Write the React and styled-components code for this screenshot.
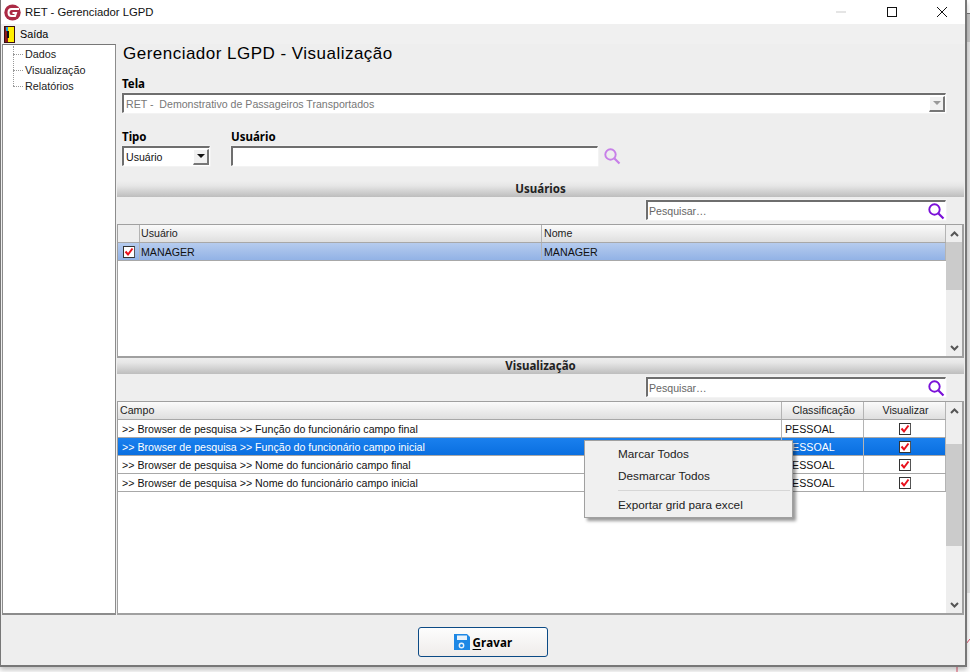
import React from "react";
import styled, { createGlobalStyle } from "styled-components";

const GlobalStyle = createGlobalStyle`
  html, body {
    margin: 0;
    padding: 0;
    width: 970px;
    height: 672px;
    overflow: hidden;
    background: #fff;
    font-family: "Liberation Sans", Arial, sans-serif;
    font-size: 11px;
    color: #000;
  }
  * { box-sizing: border-box; }
`;

const Win = styled.div`
  position: relative;
  width: 967px;
  height: 667px;
  background: #eeeeee;
  border-left: 1px solid #777;
  border-right: 2px solid #777;
  border-bottom: 2px solid #777;
  display: flex;
  flex-direction: column;
  box-shadow: 0 3px 5px rgba(0, 0, 0, 0.25);
`;

const BehindStrip = styled.div`
  position: absolute;
  left: 966px;
  top: 13px;
  width: 4px;
  height: 580px;
  border-top: 1px solid #777;
  background: linear-gradient(#c8c8c8 0, #c8c8c8 28px, #e6e6e6 28px);
`;

const CornerMark = styled.svg`
  position: absolute;
  left: 950px;
  top: 630px;
`;

const TitleBar = styled.div`
  height: 24px;
  background: #fff;
  display: flex;
  align-items: center;
  padding-left: 3px;
  font-size: 11.3px;
  gap: 4px;
  flex: none;
`;

const TitleText = styled.span`
  flex: 1;
  color: #111;
`;

const WinButton = styled.div`
  width: 46px;
  height: 24px;
  display: flex;
  align-items: center;
  justify-content: center;
`;

const MenuBar = styled.div`
  height: 20px;
  display: flex;
  align-items: center;
  padding-left: 3px;
  gap: 5px;
  flex: none;
  background: #f0f0f0;
  font-size: 10.8px;
`;

const Body = styled.div`
  flex: none;
  height: 571px;
  display: flex;
  padding: 0 1px;
`;

const Sidebar = styled.div`
  width: 114px;
  background: #fff;
  border: 1px solid #8c8c8c;
  border-top: 1px solid #777;
  border-bottom-width: 2px;
  padding-top: 1px;
  flex: none;
`;

const TreeItem = styled.div`
  height: 16px;
  line-height: 16px;
  padding-left: 22px;
  position: relative;
  font-size: 10.8px;
  color: #222;
  &::before {
    content: "";
    position: absolute;
    left: 10px;
    top: 8px;
    width: 10px;
    border-top: 1px dotted #999;
  }
  &::after {
    content: "";
    position: absolute;
    left: 10px;
    top: ${(p) => (p.$first ? "0" : "-8px")};
    height: ${(p) => (p.$first ? "8px" : "16px")};
    border-left: 1px dotted #999;
  }
`;

const Main = styled.div`
  flex: 1;
  min-width: 0;
  display: flex;
  flex-direction: column;
  padding-left: 1px;
`;

const Heading = styled.div`
  height: 20px;
  margin-left: 6px;
  font-size: 17px;
  line-height: 20px;
  letter-spacing: 0.48px;
`;

const Label = styled.div`
  font-family: "Noto Sans", "Liberation Sans", sans-serif;
  font-weight: 700;
  font-size: 11.5px;
  line-height: 14px;
  height: 14px;
`;

const TelaBlock = styled.div`
  margin: 13px 0 0 5px;
  width: 824px;
  display: flex;
  flex-direction: column;
  gap: 2px;
`;

const Sunken = styled.div`
  height: ${(p) => p.$h || 20}px;
  width: ${(p) => (p.$w ? `${p.$w}px` : "auto")};
  background: #fff;
  border-top: 2px solid #6e6e6e;
  border-left: 2px solid #6e6e6e;
  border-right: 1px solid #fff;
  border-bottom: 1px solid #fff;
  box-shadow: 0 0 0 0.5px #f8f8f8;
  display: flex;
  align-items: center;
  font-size: 10.6px;
  padding-left: 2px;
`;

const ComboText = styled.span`
  flex: 1;
  color: ${(p) => (p.$muted ? "#777" : "#111")};
  white-space: pre;
`;

const ComboArrow = styled.div`
  width: 16px;
  height: 16px;
  background: #f1f1f1;
  border-right: 2px solid #777;
  border-bottom: 2px solid #777;
  border-left: 1px solid #fff;
  border-top: 1px solid #fff;
  display: flex;
  align-items: center;
  justify-content: center;
  &::before {
    content: "";
    border-left: 4px solid transparent;
    border-right: 4px solid transparent;
    border-top: 4px solid ${(p) => (p.$muted ? "#999" : "#111")};
  }
`;

const FilterRow = styled.div`
  margin: 17px 0 0 5px;
  display: flex;
  gap: 21px;
  height: 36px;
`;

const Field = styled.div`
  display: flex;
  flex-direction: column;
  gap: 2px;
`;

const UserInputRow = styled.div`
  display: flex;
  align-items: center;
  gap: 5px;
`;

const SectionBar = styled.div`
  height: 16px;
  margin-top: ${(p) => p.$mt || 0}px;
  flex: none;
  background: linear-gradient(#eeeeee, #e6e6e6 30%, #bdbdbd);
  text-align: center;
  font-family: "Noto Sans", "Liberation Sans", sans-serif;
  font-weight: 700;
  font-size: 11.5px;
  line-height: 16px;
  color: #222;
`;

const SearchRow = styled.div`
  height: 20px;
  margin: ${(p) => p.$mt}px 18px 0 0;
  display: flex;
  justify-content: flex-end;
  flex: none;
`;

const SearchBox = styled(Sunken)`
  width: 300px;
  height: 20px;
  padding-left: 1px;
  justify-content: space-between;
  color: #666;
`;

const GridWrap = styled.div`
  height: ${(p) => p.$h}px;
  margin-top: ${(p) => p.$mt}px;
  flex: none;
  border: 1px solid #a0a0a0;
  border-right: 2px solid #a0a0a0;
  border-bottom-width: 2px;
  background: #fff;
  display: flex;
`;

const GridBody = styled.div`
  flex: 1;
  min-width: 0;
  position: relative;
`;

const Row = styled.div`
  display: grid;
  grid-template-columns: ${(p) => p.$cols};
  height: 18px;
  border-bottom: 1px solid #a8a8a8;
  background: ${(p) => p.$bg || "#fff"};
  color: ${(p) => p.$fg || "#111"};
  font-size: 10.65px;
  line-height: 18px;
  white-space: pre;
`;

const HeadRow = styled(Row)`
  background: linear-gradient(#fbfbfb, #dfdfdf);
  color: #222;
  line-height: 17px;
`;

const Cell = styled.div`
  padding-left: ${(p) => p.$pad ?? 2}px;
  border-right: 1px solid #b4b4b4;
  overflow: hidden;
  text-align: ${(p) => p.$align || "left"};
  display: ${(p) => (p.$center ? "flex" : "block")};
  align-items: center;
  justify-content: center;
  ${(p) => p.$gutter && "background: #eee;"}
`;

const CheckBox = styled.div`
  width: 12px;
  height: 12px;
  background: #fff;
  border: 1px solid #333;
  border-right-color: #555;
  display: flex;
  align-items: center;
  justify-content: center;
`;

const ScrollBar = styled.div`
  width: 16px;
  flex: none;
  background: #eeeeee;
  display: flex;
  flex-direction: column;
`;

const ScrollArrow = styled.div`
  height: 17px;
  flex: none;
  display: flex;
  align-items: center;
  justify-content: center;
`;

const ScrollTrack = styled.div`
  flex: 1;
`;

const ScrollThumb = styled.div`
  height: ${(p) => p.$h}px;
  margin-top: ${(p) => p.$top || 0}px;
  background: #cbcbcb;
`;

const Footer = styled.div`
  flex: 1;
  display: flex;
  align-items: flex-start;
  justify-content: center;
  padding-top: 12px;
`;

const SaveButton = styled.button`
  width: 130px;
  height: 30px;
  border: 1px solid #0b4a85;
  border-radius: 3px;
  background: linear-gradient(#fdfdfd, #efecea);
  display: flex;
  align-items: center;
  justify-content: center;
  gap: 3px;
  font: 700 11.5px "Noto Sans", "Liberation Sans", sans-serif;
  letter-spacing: 0.2px;
  color: #000;
  padding: 0;
  u { text-underline-offset: 2px; }
`;

const Menu = styled.div`
  position: absolute;
  left: 583px;
  top: 440px;
  width: 209px;
  height: 78px;
  background: #f0f0f0;
  border: 1px solid #a0a0a0;
  box-shadow: 3px 3px 3px rgba(0, 0, 0, 0.4);
  padding: 2px;
  font-size: 11.75px;
  color: #222;
`;

const MenuItem = styled.div`
  height: 22px;
  line-height: 22px;
  padding-left: 31px;
`;

const MenuSep = styled.div`
  height: 1px;
  margin: 3px 0 3px 31px;
  background: #d6d6d6;
`;

const Logo = () => (
  <svg width="17" height="17" viewBox="0 0 17 17">
    <ellipse cx="8.5" cy="8.5" rx="8.2" ry="8" fill="#ab2a45" />
    <path d="M15 5H7.5C5.5 5 4.5 6.5 4.5 8.5S5.5 12 7.5 12H11l1-3H8.5" fill="none" stroke="#fff" strokeWidth="2" />
  </svg>
);

const Door = () => (
  <svg width="11" height="17" viewBox="0 0 11 17">
    <rect width="11" height="17" fill="#3a1010" />
    <rect x="1" y="1" width="3" height="15" fill="#8c1a1a" />
    <rect x="4" y="1" width="6" height="15" fill="#ffee00" />
    <rect x="3" y="5" width="2" height="7" fill="#111" />
    <rect x="2" y="1" width="2" height="4" fill="#1c9fe0" />
  </svg>
);

const Lens = ({ color, size = 18 }) => (
  <svg width={size} height={size} viewBox="0 0 18 18" fill="none" stroke={color}>
    <circle cx="7.5" cy="7.5" r="5.2" strokeWidth="1.9" />
    <path d="M11.5 11.5L16.5 16.5" strokeWidth="2.2" />
  </svg>
);

const Check = () => (
  <svg width="10" height="10" viewBox="0 0 10 10" fill="none">
    <path d="M1.5 4.5L4 7.5L8.5 1.5" stroke="#e8101c" strokeWidth="2" />
  </svg>
);

const Chevron = ({ down }) => (
  <svg width="9" height="6" viewBox="0 0 9 6" fill="none">
    <path d={down ? "M1 1l3.5 3.5L8 1" : "M1 5l3.5-3.5L8 5"} stroke="#555" strokeWidth="2" />
  </svg>
);

const userCols = "22px 402px 1fr";
const fieldCols = "664px 82px 1fr";

const campos = [
  ">> Browser de pesquisa >> Função do funcionário campo final",
  ">> Browser de pesquisa >> Função do funcionário campo inicial",
  ">> Browser de pesquisa >> Nome do funcionário campo final",
  ">> Browser de pesquisa >> Nome do funcionário campo inicial",
];

export default function App() {
  return (
    <>
      <GlobalStyle />
      <BehindStrip />
      <CornerMark width="20" height="42" fill="none">
        <path d="M16 14l4-5M7 36v6" stroke="#e0506a" />
      </CornerMark>
      <Win>
        <TitleBar>
          <Logo />
          <TitleText>RET - Gerenciador LGPD</TitleText>
          <WinButton>
            <svg width="12" height="2"><rect y="0.5" width="10" height="1" fill="#ccc" /></svg>
          </WinButton>
          <WinButton>
            <svg width="11" height="11" fill="none"><rect x="0.5" y="0.5" width="9" height="9" stroke="#111" /></svg>
          </WinButton>
          <WinButton>
            <svg width="12" height="12" fill="none"><path d="M1 1l10 10M11 1L1 11" stroke="#111" /></svg>
          </WinButton>
        </TitleBar>
        <MenuBar>
          <Door />
          <span>Saída</span>
        </MenuBar>
        <Body>
          <Sidebar>
            <TreeItem $first>Dados</TreeItem>
            <TreeItem>Visualização</TreeItem>
            <TreeItem>Relatórios</TreeItem>
          </Sidebar>
          <Main>
            <Heading>Gerenciador LGPD - Visualização</Heading>
            <TelaBlock>
              <Label>Tela</Label>
              <Sunken>
                <ComboText $muted>RET -  Demonstrativo de Passageiros Transportados</ComboText>
                <ComboArrow $muted />
              </Sunken>
            </TelaBlock>
            <FilterRow>
              <Field>
                <Label>Tipo</Label>
                <Sunken $w={88} $h={20}>
                  <ComboText>Usuário</ComboText>
                  <ComboArrow />
                </Sunken>
              </Field>
              <Field>
                <Label>Usuário</Label>
                <UserInputRow>
                  <Sunken $w={367} $h={20} />
                  <Lens color="#c77fe8" />
                </UserInputRow>
              </Field>
            </FilterRow>
            <SectionBar $mt={15}>Usuários</SectionBar>
            <SearchRow $mt={3}>
              <SearchBox>
                Pesquisar…
                <Lens color="#7a10d8" />
              </SearchBox>
            </SearchRow>
            <GridWrap $h={134} $mt={4}>
              <GridBody>
                <HeadRow $cols={userCols}>
                  <Cell $gutter />
                  <Cell $pad={1}>Usuário</Cell>
                  <Cell>Nome</Cell>
                </HeadRow>
                <Row $cols={userCols} $bg="linear-gradient(#b6ccee, #92b2e6)">
                  <Cell $center $pad={0}>
                    <CheckBox><Check /></CheckBox>
                  </Cell>
                  <Cell $pad={1}>MANAGER</Cell>
                  <Cell>MANAGER</Cell>
                </Row>
              </GridBody>
              <ScrollBar>
                <ScrollArrow><Chevron /></ScrollArrow>
                <ScrollThumb $h={48} />
                <ScrollTrack />
                <ScrollArrow><Chevron down /></ScrollArrow>
              </ScrollBar>
            </GridWrap>
            <SectionBar>Visualização</SectionBar>
            <SearchRow $mt={3}>
              <SearchBox>
                Pesquisar…
                <Lens color="#7a10d8" />
              </SearchBox>
            </SearchRow>
            <GridWrap $h={214} $mt={4}>
              <GridBody>
                <HeadRow $cols={fieldCols}>
                  <Cell>Campo</Cell>
                  <Cell $align="center">Classificação</Cell>
                  <Cell $align="center">Visualizar</Cell>
                </HeadRow>
                {campos.map((campo, i) => (
                  <Row
                    key={campo}
                    $cols={fieldCols}
                    $bg={i === 1 ? "linear-gradient(#1a80ee, #0a6fe0)" : "#fff"}
                    $fg={i === 1 ? "#fff" : "#111"}
                  >
                    <Cell $pad={4}>{campo}</Cell>
                    <Cell $pad={3}>PESSOAL</Cell>
                    <Cell $center $pad={0}>
                      <CheckBox><Check /></CheckBox>
                    </Cell>
                  </Row>
                ))}
              </GridBody>
              <ScrollBar>
                <ScrollArrow><Chevron /></ScrollArrow>
                <ScrollThumb $h={102} $top={25} />
                <ScrollTrack />
                <ScrollArrow><Chevron down /></ScrollArrow>
              </ScrollBar>
            </GridWrap>
          </Main>
        </Body>
        <Footer>
          <SaveButton>
            <svg width="16" height="16" viewBox="0 0 16 16">
              <path d="M0 0h13l3 3v13H0z" fill="#1e88e5" />
              <rect x="3" y="1.5" width="10" height="4.5" fill="#e8f2fb" />
              <circle cx="7.5" cy="11.5" r="2.2" fill="none" stroke="#e8f2fb" strokeWidth="1.4" />
            </svg>
            <span><u>G</u>ravar</span>
          </SaveButton>
        </Footer>
        <Menu>
          <MenuItem>Marcar Todos</MenuItem>
          <MenuItem>Desmarcar Todos</MenuItem>
          <MenuSep />
          <MenuItem>Exportar grid para excel</MenuItem>
        </Menu>
      </Win>
    </>
  );
}
